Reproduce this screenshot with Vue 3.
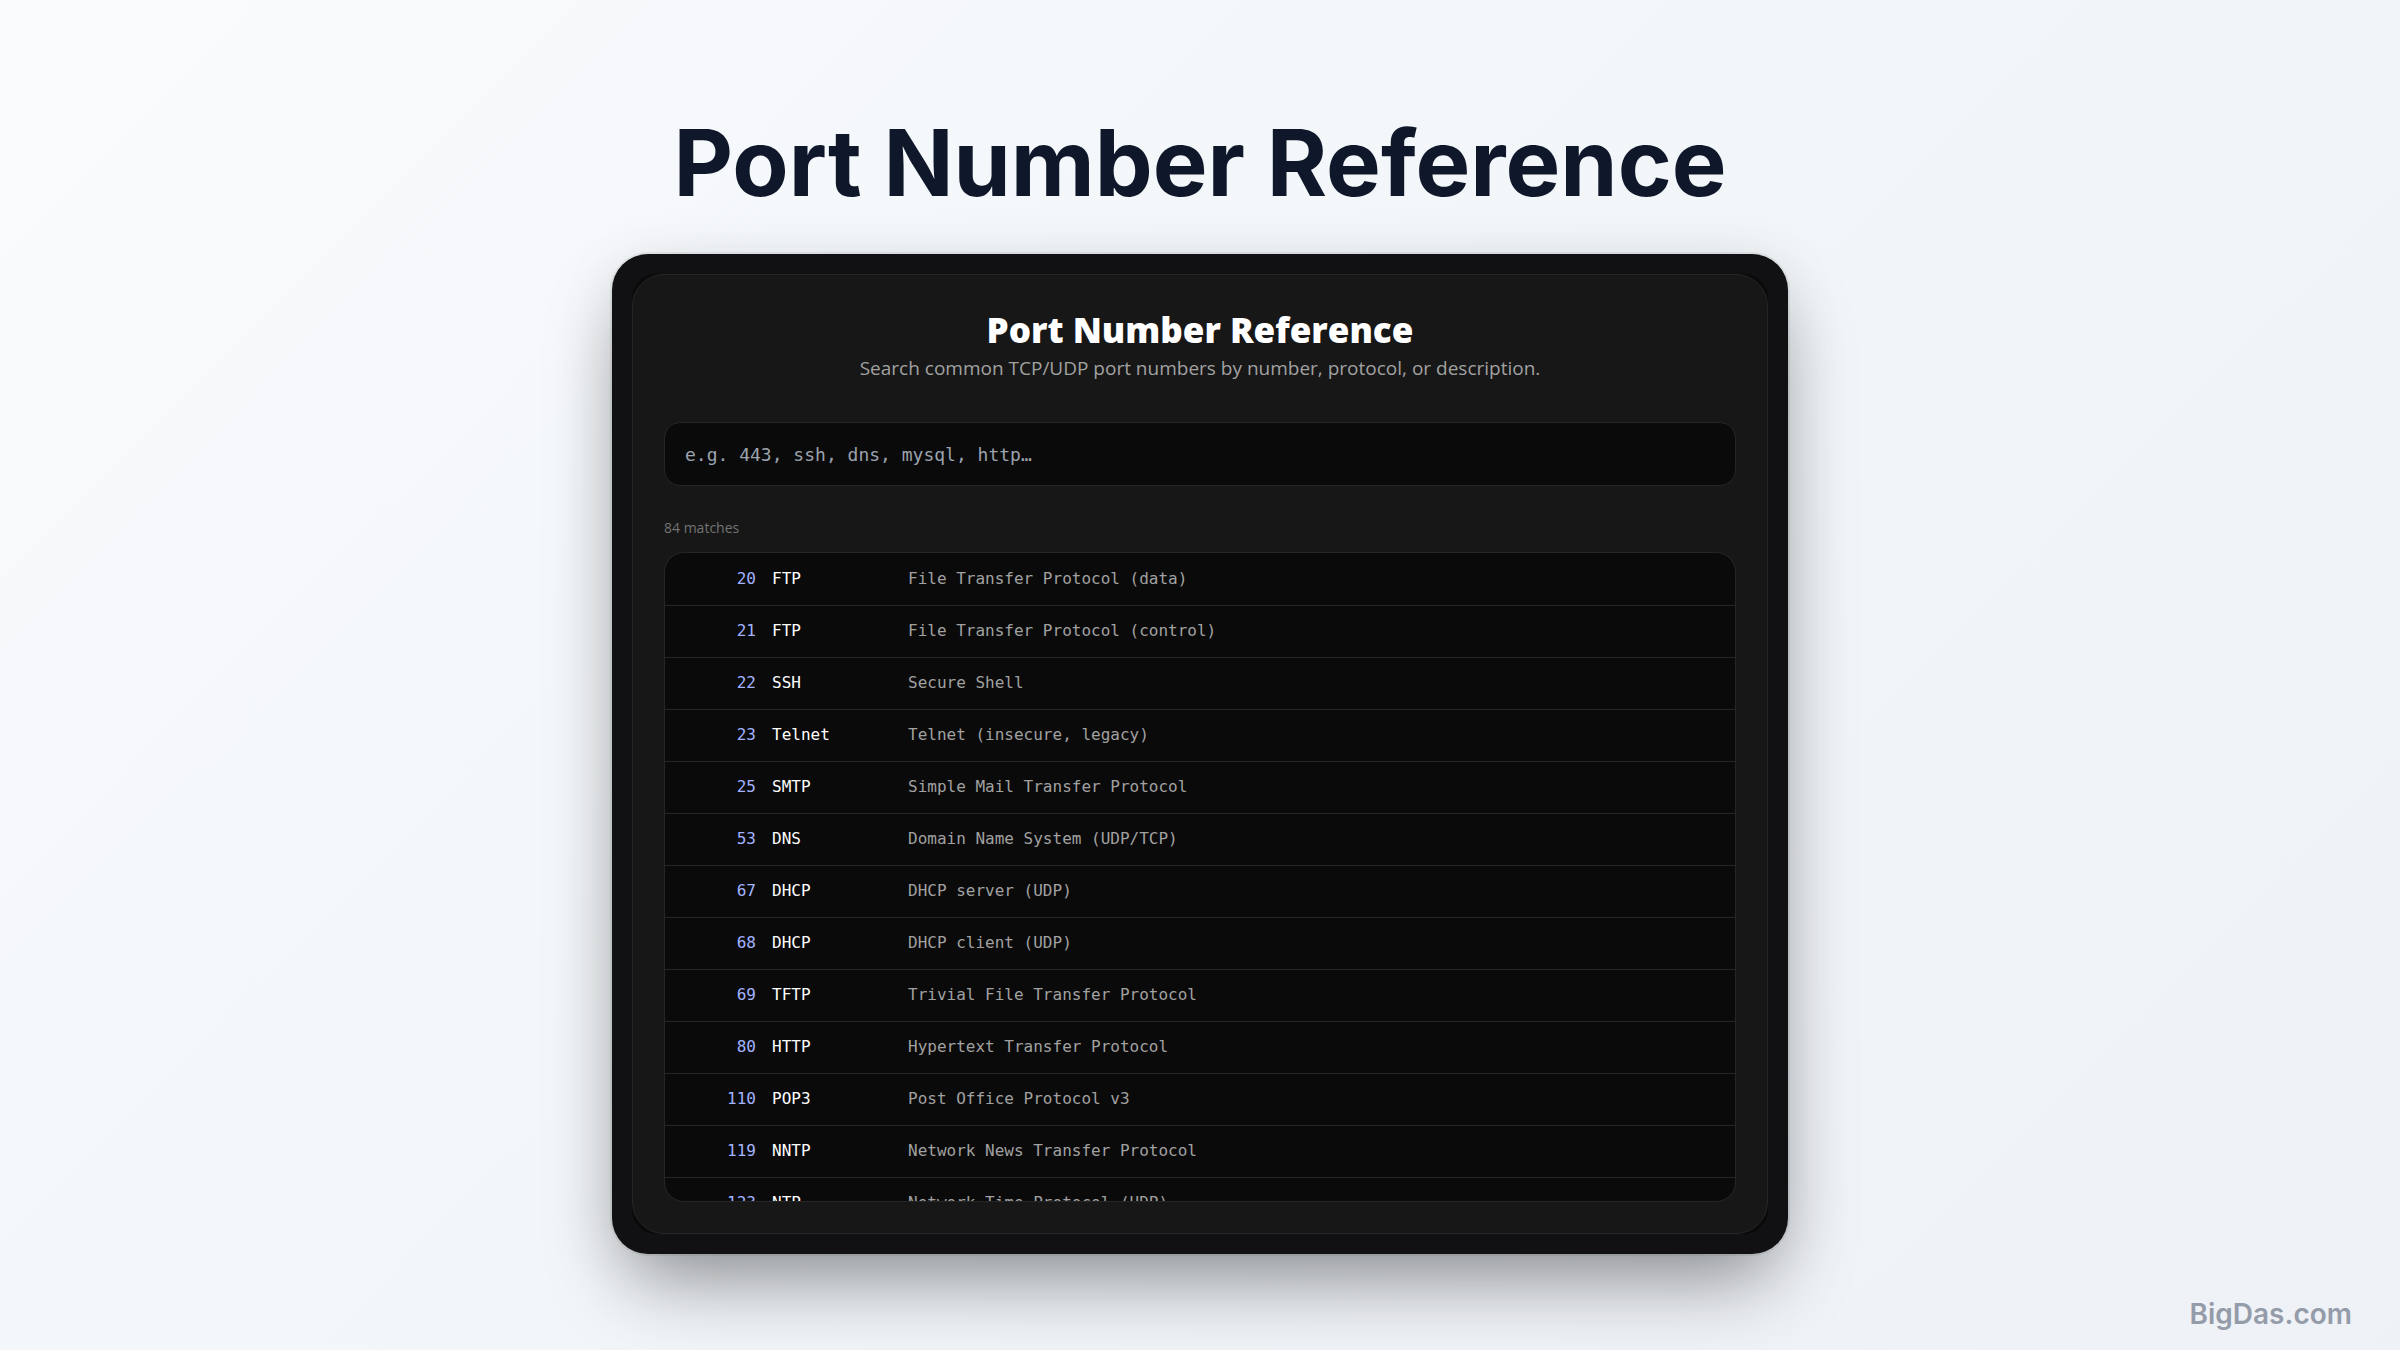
<script setup>
import { ref, computed } from 'vue'

const query = ref('')
const ports = [
  [20, 'FTP', 'File Transfer Protocol (data)'],
  [21, 'FTP', 'File Transfer Protocol (control)'],
  [22, 'SSH', 'Secure Shell'],
  [23, 'Telnet', 'Telnet (insecure, legacy)'],
  [25, 'SMTP', 'Simple Mail Transfer Protocol'],
  [53, 'DNS', 'Domain Name System (UDP/TCP)'],
  [67, 'DHCP', 'DHCP server (UDP)'],
  [68, 'DHCP', 'DHCP client (UDP)'],
  [69, 'TFTP', 'Trivial File Transfer Protocol'],
  [80, 'HTTP', 'Hypertext Transfer Protocol'],
  [110, 'POP3', 'Post Office Protocol v3'],
  [119, 'NNTP', 'Network News Transfer Protocol'],
  [123, 'NTP', 'Network Time Protocol (UDP)'],
]
const total = 84
const rows = computed(() => {
  const q = query.value.trim().toLowerCase()
  return q ? ports.filter((p) => p.join(' ').toLowerCase().includes(q)) : ports
})
const count = computed(() => (query.value.trim() ? rows.value.length : total))
</script>

<template>
  <div class="page">
    <h1 class="title">Port Number Reference</h1>
    <main class="frame">
      <div class="backing">
        <section class="card">
          <header class="head">
            <h2>Port Number Reference</h2>
            <p>Search common TCP/UDP port numbers by number, protocol, or description.</p>
          </header>
          <input
            v-model="query"
            class="search"
            type="text"
            aria-label="Search ports"
            placeholder="e.g. 443, ssh, dns, mysql, http…"
          />
          <p class="count">{{ count }} matches</p>
          <div class="list">
            <table>
              <tbody>
                <tr v-for="[port, name, text] in rows" :key="port">
                  <td class="port">{{ port }}</td>
                  <td class="name">{{ name }}</td>
                  <td class="text">{{ text }}</td>
                </tr>
              </tbody>
            </table>
          </div>
        </section>
      </div>
    </main>
    <footer class="brand">BigDas.com</footer>
  </div>
</template>

<style>
body {
  margin: 0;
}
</style>

<style scoped>
.page {
  box-sizing: border-box;
  position: relative;
  display: flex;
  flex-direction: column;
  align-items: center;
  min-height: 100vh;
  padding: 104px 0 96px;
  background: linear-gradient(135deg, #f9fbfd 0%, #f1f5f8 60%, #eef1f6 100%);
  font-family: "Open Sans", "Noto Sans", sans-serif;
}
.title {
  margin: 0 0 32px;
  font: 700 92px/118px Inter, sans-serif;
  color: #0f172a;
  white-space: nowrap;
}
.frame {
  box-sizing: border-box;
  width: 49%;
  padding: 20px;
  border-radius: 36px;
  background: #111113;
  box-shadow: 0 0 0 2px rgba(0, 0, 0, 0.06), 0 40px 80px -16px rgba(0, 0, 0, 0.4), 0 8px 60px rgba(15, 23, 42, 0.08);
}
.backing {
  border-radius: 24px;
  background: #0a0a0a;
}
.card {
  padding: 31px;
  border: 1px solid #262626;
  border-radius: 32px;
  background: #171717;
}
.head {
  text-align: center;
}
.head h2 {
  margin: 0;
  font-size: 35px;
  line-height: 48px;
  font-weight: 800;
  color: #fff;
}
.head p {
  margin: 0 0 40px;
  font-size: 19px;
  line-height: 28px;
  color: #a1a1a1;
}
.search {
  box-sizing: border-box;
  display: block;
  width: 100%;
  height: 64px;
  padding: 0 20px;
  border: 1px solid #262626;
  border-radius: 16px;
  background: #0a0a0a;
  font: 18px/28px "DejaVu Sans Mono", monospace;
  color: #fff;
  outline: none;
}
.search::placeholder {
  color: #9ca3af;
  opacity: 1;
}
.count {
  margin: 30px 0 12px;
  font-size: 14px;
  line-height: 24px;
  color: #737373;
}
.list {
  height: 648px;
  overflow: hidden;
  border: 1px solid #262626;
  border-radius: 20px;
  background: #0a0a0a;
}
table {
  width: 100%;
  border-collapse: collapse;
  table-layout: fixed;
  font: 16px/24px "DejaVu Sans Mono", monospace;
}
td {
  box-sizing: border-box;
  height: 52px;
  padding: 0;
  border-bottom: 1px solid #262626;
}
.port {
  width: 107px;
  padding-right: 16px;
  text-align: right;
  color: #a3b3ff;
}
.name {
  width: 136px;
  color: #fff;
}
.text {
  color: #a1a1a1;
}
.brand {
  position: absolute;
  right: 48px;
  bottom: 18px;
  font: 600 28px/36px Inter, sans-serif;
  color: #959ca9;
}
</style>
